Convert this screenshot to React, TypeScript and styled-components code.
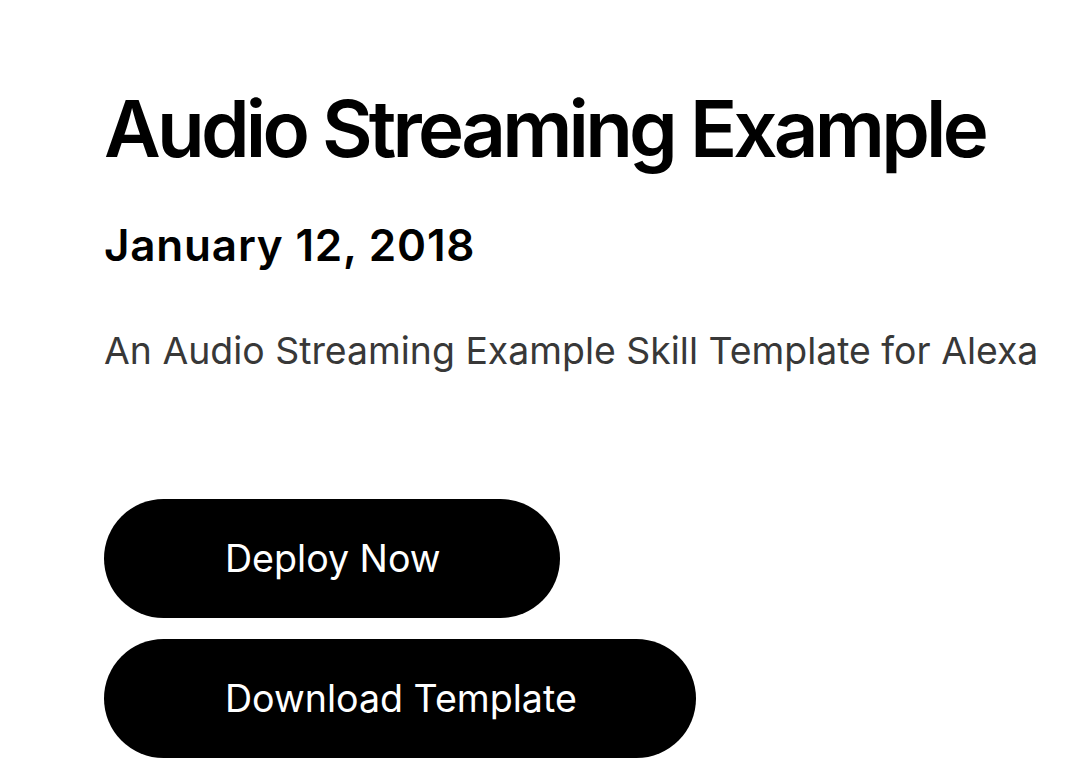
import React from "react";
import styled, { createGlobalStyle } from "styled-components";

const GlobalStyle = createGlobalStyle`
  html, body {
    margin: 0;
    padding: 0;
    background: #ffffff;
  }
  body {
    font-family: "Inter", "Liberation Sans", sans-serif;
    -webkit-font-smoothing: antialiased;
  }
`;

const Page = styled.main`
  display: flex;
  flex-direction: column;
  align-items: flex-start;
  padding: 84px 0 0 104px;
`;

const Title = styled.h1`
  margin: 0;
  font-size: 78px;
  font-weight: 600;
  line-height: 90px;
  letter-spacing: -3.8px;
  color: #000000;
`;

const DateLine = styled.h2`
  margin: 45px 0 0;
  font-size: 44px;
  font-weight: 600;
  line-height: 52px;
  letter-spacing: 0.8px;
  color: #000000;
`;

const Description = styled.p`
  margin: 58px 0 0;
  font-size: 37.4px;
  font-weight: 400;
  line-height: 44px;
  color: #383838;
`;

const Actions = styled.div`
  display: flex;
  flex-direction: column;
  align-items: flex-start;
  gap: 21px;
  margin-top: 126px;
`;

const PillButton = styled.button`
  height: 119px;
  padding: 0 119px 0 121px;
  border: none;
  border-radius: 60px;
  background: #000000;
  color: #ffffff;
  font-family: inherit;
  font-size: 37.6px;
  font-weight: 400;
  cursor: pointer;
`;

export default function App() {
  return (
    <>
      <GlobalStyle />
      <Page>
        <Title>Audio Streaming Example</Title>
        <DateLine>January 12, 2018</DateLine>
        <Description>An Audio Streaming Example Skill Template for Alexa</Description>
        <Actions>
          <PillButton>Deploy Now</PillButton>
          <PillButton>Download Template</PillButton>
        </Actions>
      </Page>
    </>
  );
}
